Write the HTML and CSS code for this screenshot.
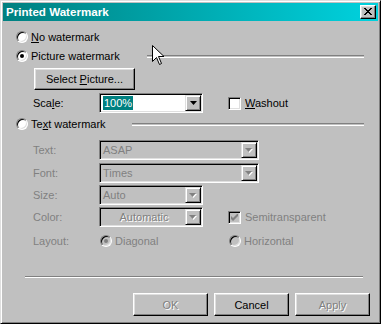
FILE: index.html
```html
<!DOCTYPE html>
<html>
<head>
<meta charset="utf-8">
<link rel="stylesheet" href="styles.css">
</head>
<body>
<div class="window">
  <div class="titlebar">
    <span class="title">Printed Watermark</span>
    <span class="close"><svg width="8" height="7" viewBox="0 0 8 7"><path d="M0 0h2v1h1v1h2v-1h1v-1h2v1h-1v1h-1v1h-1v1h1v1h1v1h1v1h-2v-1h-1v-1h-2v1h-1v1h-2v-1h1v-1h1v-1h1v-1h-1v-1h-1v-1h-1z" fill="#000"/></svg></span>
  </div>
  <div class="content">
    <div class="row r1">
      <span class="radio"></span><span class="lbl"><u>N</u>o watermark</span>
    </div>
    <div class="row r2">
      <span class="radio on"></span><span class="lbl grp-pic">Picture watermark</span><span class="etch"></span>
    </div>
    <div class="row r3">
      <span class="btn btn-select"><span>Select <u>P</u>icture...</span></span>
    </div>
    <div class="row r4">
      <span class="field-lbl">Sca<u>l</u>e:</span>
      <span class="combo w104"><span class="val"><span class="sel">100%</span></span><span class="drop"><svg width="7" height="4" viewBox="0 0 7 4"><path d="M0 0h7l-3.5 4z" fill="#000"/></svg></span></span>
      <span class="check"></span><span class="lbl chk-lbl"><u>W</u>ashout</span>
    </div>
    <div class="row r5">
      <span class="radio"></span><span class="lbl grp-text">Te<u>x</u>t watermark</span><span class="etch"></span>
    </div>
    <div class="row r6">
      <span class="field-lbl dis">Text:</span>
      <span class="combo w160 off"><span class="val">ASAP</span><span class="drop"><svg width="8" height="5" viewBox="0 0 8 5"><path d="M1 1h7l-3.5 4z" fill="#fff"/><path d="M0 0h7l-3.5 4z" fill="#808080"/></svg></span></span>
    </div>
    <div class="row r7">
      <span class="field-lbl dis">Font:</span>
      <span class="combo w160 off"><span class="val">Times</span><span class="drop"><svg width="8" height="5" viewBox="0 0 8 5"><path d="M1 1h7l-3.5 4z" fill="#fff"/><path d="M0 0h7l-3.5 4z" fill="#808080"/></svg></span></span>
    </div>
    <div class="row r8">
      <span class="field-lbl dis">Size:</span>
      <span class="combo w104 off"><span class="val">Auto</span><span class="drop"><svg width="8" height="5" viewBox="0 0 8 5"><path d="M1 1h7l-3.5 4z" fill="#fff"/><path d="M0 0h7l-3.5 4z" fill="#808080"/></svg></span></span>
    </div>
    <div class="row r9">
      <span class="field-lbl dis">Color:</span>
      <span class="combo w104 off"><span class="val center emb">Automatic</span><span class="drop"><svg width="8" height="5" viewBox="0 0 8 5"><path d="M1 1h7l-3.5 4z" fill="#fff"/><path d="M0 0h7l-3.5 4z" fill="#808080"/></svg></span></span>
      <span class="check off"><svg width="7" height="7" viewBox="0 0 7 7"><path d="M0 2v3l2 2 5-5v-3l-5 5z" fill="#808080"/></svg></span><span class="lbl chk-lbl dis">Semitransparent</span>
    </div>
    <div class="row r10">
      <span class="field-lbl dis lay">Layout:</span>
      <span class="opt"><span class="radio on off"></span><span class="lbl dis">Diagonal</span></span>
      <span class="opt"><span class="radio off"></span><span class="lbl dis">Horizontal</span></span>
    </div>
    <div class="sep"></div>
    <div class="buttons">
      <span class="btn btn-act dis emb">OK</span>
      <span class="btn btn-act">Cancel</span>
      <span class="btn btn-act dis emb">Apply</span>
    </div>
  </div>
  <svg class="cursor" width="13" height="22" viewBox="0 0 13 22"><path d="M0.5 0.5v16l4-4 3 7 2-1-3-7h5.5z" fill="#fff" stroke="#000" stroke-width="1"/></svg>
</div>
</body>
</html>
```

FILE: styles.css
```css
html, body {
  margin: 0;
  padding: 0;
  background: #c0c0c0;
}
body {
  font-family: "Liberation Sans", Arial, sans-serif;
  font-size: 11px;
  color: #000;
}
.window {
  position: relative;
  width: 381px;
  height: 324px;
  box-sizing: border-box;
  background: #c0c0c0;
  border: 1px solid;
  border-color: #dfdfdf #000 #000 #dfdfdf;
  box-shadow: inset 1px 1px #fff, inset -1px -1px #808080;
  padding: 2px;
  overflow: hidden;
}
.titlebar {
  height: 18px;
  display: flex;
  align-items: center;
  justify-content: space-between;
  background: linear-gradient(to right, #008080, #00d2de);
  padding: 0 2px 0 3px;
}
.title {
  color: #fff;
  font-weight: bold;
  font-size: 11.6px;
  line-height: 18px;
}
.close {
  width: 16px;
  height: 14px;
  box-sizing: border-box;
  background: #c0c0c0;
  border: 1px solid;
  border-color: #fff #000 #000 #fff;
  box-shadow: inset -1px -1px #808080, inset 1px 1px #dfdfdf;
  display: flex;
  align-items: center;
  justify-content: center;
  padding: 0 1px 1px 0;
}
.close svg { display: block; }
.content {
  padding: 0 14px 0 13px;
}
.row {
  display: flex;
  align-items: center;
  height: 16px;
}
.r1 { margin-top: 8px; }
.r2 { margin-top: 3px; }
.r3 { margin-top: 4px; height: 22px; }
.r4 { margin-top: 3px; height: 20px; }
.r5 { margin-top: 3px; }
.r6 { margin-top: 8px; height: 20px; }
.r7 { margin-top: 3px; height: 20px; }
.r8 { margin-top: 2px; height: 20px; }
.r9 { margin-top: 2px; height: 20px; }
.r10 { margin-top: 6px; }
.lbl {
  margin-left: 3px;
  white-space: nowrap;
  line-height: 13px;
}
.grp-pic { width: 116px; flex: none; }
.grp-text { width: 101px; flex: none; }
.etch {
  flex: 1;
  height: 1px;
  border-top: 1px solid #808080;
  border-bottom: 1px solid #fff;
}
.radio {
  position: relative;
  flex: none;
  width: 12px;
  height: 12px;
  box-sizing: border-box;
  border-radius: 50%;
  background: #fff;
  border: 1px solid;
  border-color: #808080 #fff #fff #808080;
  box-shadow: inset 1px 1px #000, inset -1px -1px #dfdfdf;
}
.radio.on::after {
  content: "";
  position: absolute;
  left: 3px;
  top: 3px;
  width: 4px;
  height: 4px;
  border-radius: 50%;
  background: #000;
}
.radio.off { background: #c0c0c0; }
.radio.on.off::after { background: #808080; }
.check {
  flex: none;
  width: 13px;
  height: 13px;
  box-sizing: border-box;
  background: #fff;
  border: 1px solid;
  border-color: #808080 #fff #fff #808080;
  box-shadow: inset 1px 1px #000, inset -1px -1px #dfdfdf;
  margin-left: 25px;
  display: flex;
  align-items: center;
  justify-content: center;
}
.check.off { background: #c0c0c0; }
.check svg { display: block; }
.chk-lbl { margin-left: 4px; }
.btn {
  display: flex;
  align-items: center;
  justify-content: center;
  box-sizing: border-box;
  background: #c0c0c0;
  border: 1px solid;
  border-color: #fff #000 #000 #fff;
  box-shadow: inset -1px -1px #808080, inset 1px 1px #dfdfdf;
  white-space: nowrap;
}
.btn-select {
  margin-left: 18px;
  width: 101px;
  height: 22px;
}
.field-lbl {
  flex: none;
  width: 66px;
  margin-left: 17px;
  white-space: nowrap;
}
.dis { color: #808080; }
.emb { color: #808080; text-shadow: 1px 1px 0 #fff; }
.combo {
  flex: none;
  display: flex;
  align-items: center;
  box-sizing: border-box;
  height: 20px;
  background: #fff;
  border: 1px solid;
  border-color: #808080 #fff #fff #808080;
  box-shadow: inset 1px 1px #000, inset -1px -1px #dfdfdf;
  padding: 2px;
}
.combo.off { background: #c0c0c0; color: #808080; }
.w104 { width: 104px; }
.w160 { width: 160px; }
.val {
  flex: 1;
  padding-left: 1px;
  white-space: nowrap;
  line-height: 14px;
}
.val.center { text-align: center; }
.sel {
  background: #008080;
  color: #fff;
  padding: 0 1px;
  display: inline-block;
  line-height: 14px;
}
.drop {
  flex: none;
  width: 16px;
  height: 16px;
  margin: -1px -1px -1px 0;
  box-sizing: border-box;
  background: #c0c0c0;
  border: 1px solid;
  border-color: #dfdfdf #000 #000 #dfdfdf;
  box-shadow: inset 1px 1px #fff, inset -1px -1px #808080;
  display: flex;
  align-items: center;
  justify-content: center;
}
.drop svg { display: block; }
.opt {
  flex: none;
  width: 129px;
  display: flex;
  align-items: center;
}
.lay { width: 67px; }
.sep {
  margin: 27px 1px 0 9px;
  height: 0;
  border-top: 1px solid #808080;
  border-bottom: 1px solid #fff;
}
.buttons {
  display: flex;
  justify-content: flex-end;
  gap: 6px;
  margin: 15px -6px 0 0;
}
.btn-act {
  width: 75px;
  height: 23px;
}
.cursor {
  position: absolute;
  left: 151px;
  top: 44px;
}
```
